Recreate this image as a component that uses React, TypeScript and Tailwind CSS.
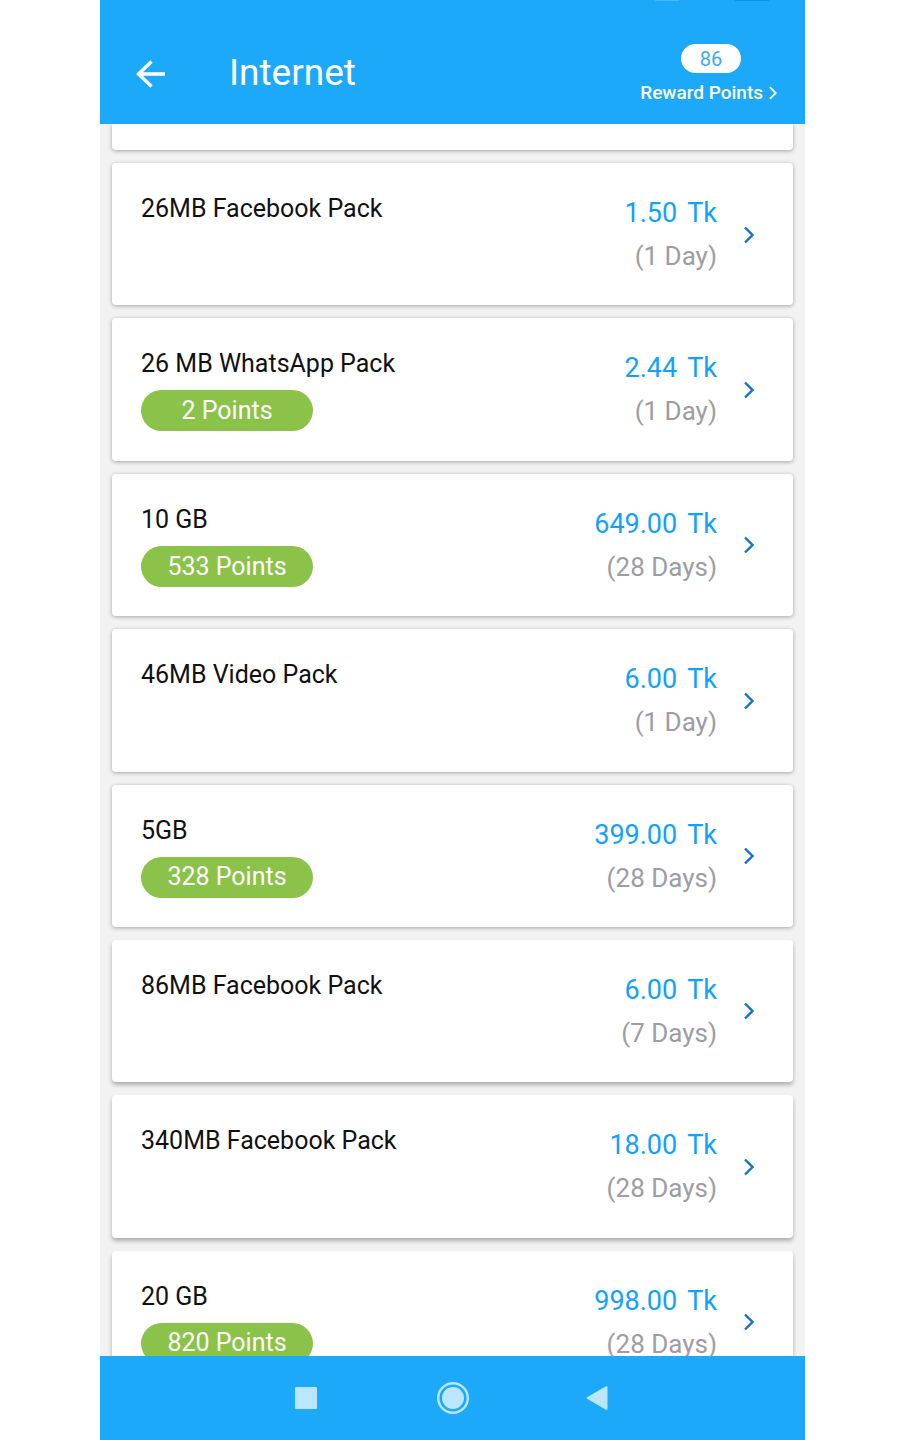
type Pack = { name: string; price: string; validity: string; points?: number; raised?: boolean };

const packs: Pack[] = [
  { name: '26MB Facebook Pack', price: '1.50', validity: '1 Day' },
  { name: '26 MB WhatsApp Pack', price: '2.44', validity: '1 Day', points: 2 },
  { name: '10 GB', price: '649.00', validity: '28 Days', points: 533 },
  { name: '46MB Video Pack', price: '6.00', validity: '1 Day' },
  { name: '5GB', price: '399.00', validity: '28 Days', points: 328 },
  { name: '86MB Facebook Pack', price: '6.00', validity: '7 Days', raised: true },
  { name: '340MB Facebook Pack', price: '18.00', validity: '28 Days', raised: true },
  { name: '20 GB', price: '998.00', validity: '28 Days', points: 820, raised: true },
];

function Chevron({ className }: { className: string }) {
  return (
    <svg viewBox="0 0 10 18" className={className} fill="none" stroke="currentColor" aria-hidden="true">
      <path d="M1 1.5 L8.5 9 L1 16.5" strokeWidth="2.4" />
    </svg>
  );
}

function PackCard({ pack }: { pack: Pack }) {
  return (
    <li className="min-w-0">
      <a
        href="#"
        className={
          pack.raised
            ? 'flex h-full items-start rounded bg-white pl-[29px] pr-[39px] pt-7 shadow-[0_3px_4px_rgba(0,0,0,0.28)]'
            : 'flex h-full items-start rounded bg-white pl-[29px] pr-[39px] pt-7 shadow-[0_1px_4px_rgba(0,0,0,0.32)]'
        }
      >
        <div className="min-w-0 flex-1">
          <h2 className="text-[25px] leading-9 text-[#111111]">{pack.name}</h2>
          {pack.points !== undefined && (
            <span className="mt-2 flex h-[41px] w-[172px] items-center justify-center rounded-full bg-[#8bc34a] text-[25px] text-white">
              {pack.points} Points
            </span>
          )}
        </div>
        <div className="text-right text-[27px] leading-[44px]">
          <p className="flex justify-end gap-2.5 text-[#12a2fb]">
            <span>{pack.price}</span>
            <span>Tk</span>
          </p>
          <p className="text-[26px] leading-[43px] text-[#9d9da3]">({pack.validity})</p>
        </div>
        <div className="ml-[27px] flex h-[87px] items-center text-[#1470d0]">
          <Chevron className="h-[18px] w-[10px]" />
        </div>
      </a>
    </li>
  );
}

export default function App() {
  return (
    <div className="h-screen bg-white pl-[100px] pr-[95px] font-['Roboto',sans-serif]">
      <div className="flex h-full flex-col bg-[#f2f2f2]">
        <header className="h-[124px] shrink-0 bg-[#1ca9f9] text-white">
          <div className="flex h-0.5 items-start justify-end gap-14 pr-9" aria-hidden="true">
            <span className="h-px w-6 bg-[#49b6f5]" />
            <span className="h-px w-[34px] bg-[#0b93e6]" />
          </div>
          <div className="flex items-start pl-9 pr-7 pt-[42px]">
            <button type="button" aria-label="Back" className="mt-4 h-7 w-[30px]">
              <svg viewBox="0 0 30 28" fill="none" stroke="currentColor" strokeWidth="3.4" className="h-full w-full">
                <path d="M15.5 1.5 L2.5 14 L15.5 26.5 M2 14 H29" />
              </svg>
            </button>
            <h1 className="ml-[63px] mt-2 flex-1 text-[37px] leading-[42px]">Internet</h1>
            <a href="#" className="flex flex-col items-end">
              <span className="mr-9 flex h-[29px] w-[60px] items-center justify-center rounded-full bg-white text-[20px] text-[#3fa9f0]">
                86
              </span>
              <span className="mt-2 flex items-center gap-1.5 text-[19px] font-medium leading-6">
                Reward Points
                <Chevron className="h-3.5 w-2" />
              </span>
            </a>
          </div>
        </header>

        <main className="min-h-0 flex-1 overflow-hidden px-3">
          <div className="mb-[13px] h-[26px] rounded-b bg-white shadow-[0_1px_4px_rgba(0,0,0,0.32)]" />
          <ul className="grid min-h-[1230px] auto-rows-fr gap-[13px]">
            {packs.map((pack) => (
              <PackCard key={pack.name} pack={pack} />
            ))}
          </ul>
        </main>

        <nav className="flex h-[84px] shrink-0 items-center justify-center bg-[#1ca9f9] text-[#bae6ff]">
          <button type="button" aria-label="Recent apps" className="flex h-12 w-[147px] items-center justify-center">
            <svg viewBox="0 0 22 22" className="h-[22px] w-[22px]">
              <rect width="22" height="22" rx="1" fill="currentColor" />
            </svg>
          </button>
          <button type="button" aria-label="Home" className="flex h-12 w-[147px] items-center justify-center">
            <svg viewBox="0 0 32 32" className="h-8 w-8">
              <circle cx="16" cy="16" r="14.8" fill="none" stroke="currentColor" strokeWidth="2.4" />
              <circle cx="16" cy="16" r="11" fill="currentColor" />
            </svg>
          </button>
          <button type="button" aria-label="Back" className="flex h-12 w-[147px] items-center justify-center pr-1.5">
            <svg viewBox="0 0 22 24" className="h-6 w-[22px]">
              <path d="M1 11.2 L20 0.3 Q21.5 0 21.5 1.5 V22.5 Q21.5 24 20 23.7 L1 12.8 Q0 12 1 11.2 Z" fill="currentColor" />
            </svg>
          </button>
        </nav>
      </div>
    </div>
  );
}
